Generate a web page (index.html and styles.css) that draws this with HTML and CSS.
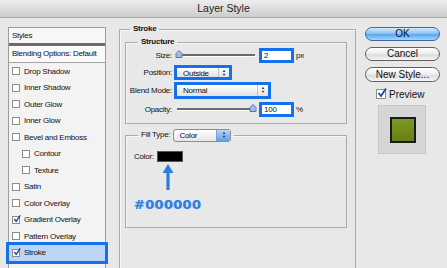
FILE: index.html
```html
<!DOCTYPE html>
<html lang="en">
<head>
    <meta charset="UTF-8">
    <meta name="viewport" content="width=device-width, initial-scale=1.0">
    <title>Layer Style</title>
    <link rel="stylesheet" href="styles.css">
</head>
<body>

<!-- Заголовок окна -->
<div class="titlebar">Layer Style</div>

<div class="dialog">

    <!-- Список стилей -->
    <div class="styles-panel">
        <div class="panel-head">Styles</div>
        <div class="panel-blend">Blending Options: Default</div>
        <ul class="style-list">
            <li><span class="box"></span>Drop Shadow</li>
            <li><span class="box"></span>Inner Shadow</li>
            <li><span class="box"></span>Outer Glow</li>
            <li><span class="box"></span>Inner Glow</li>
            <li><span class="box"></span>Bevel and Emboss</li>
            <li class="sub"><span class="box"></span>Contour</li>
            <li class="sub"><span class="box"></span>Texture</li>
            <li><span class="box"></span>Satin</li>
            <li><span class="box"></span>Color Overlay</li>
            <li><span class="box"><svg class="tick" viewBox="0 0 10 10"><path d="M1.5 5 L4 8 L9 0.5"/></svg></span>Gradient Overlay</li>
            <li><span class="box"></span>Pattern Overlay</li>
            <li class="current"><span class="box"><svg class="tick" viewBox="0 0 10 10"><path d="M1.5 5 L4 8 L9 0.5"/></svg></span>Stroke</li>
        </ul>
    </div>

    <!-- Настройки обводки -->
    <div class="main">
        <fieldset class="group stroke">
            <legend>Stroke</legend>

            <fieldset class="group structure">
                <legend>Structure</legend>
                <div class="form">
                    <label>Size:</label>
                    <div class="ctl">
                        <div class="slider">
                            <svg class="thumb thumb-left" viewBox="0 0 8 8"><path d="M1 3.5 L4 0.5 L7 3.5 V7.5 H1 Z"/></svg>
                        </div>
                        <span class="mark field">2</span>
                        <span class="unit">px</span>
                    </div>

                    <label>Position:</label>
                    <div class="ctl">
                        <span class="mark popup-wrap pos">
                            <span class="popup"><span class="val">Outside</span><span class="steps">&#9650;<br>&#9660;</span></span>
                        </span>
                    </div>

                    <label>Blend Mode:</label>
                    <div class="ctl">
                        <span class="mark popup-wrap blend">
                            <span class="popup"><span class="val">Normal</span><span class="steps">&#9650;<br>&#9660;</span></span>
                        </span>
                    </div>

                    <label>Opacity:</label>
                    <div class="ctl">
                        <div class="slider">
                            <svg class="thumb thumb-right" viewBox="0 0 8 8"><path d="M1 3.5 L4 0.5 L7 3.5 V7.5 H1 Z"/></svg>
                        </div>
                        <span class="mark field">100</span>
                        <span class="unit">%</span>
                    </div>
                </div>
            </fieldset>

            <fieldset class="group fill">
                <legend>
                    <span>Fill Type:</span>
                    <span class="select"><span class="val">Color</span><span class="steps">&#9650;<br>&#9660;</span></span>
                </legend>
                <div class="color-row">
                    <span>Color:</span>
                    <span class="swatch"></span>
                </div>
                <svg class="arrow" viewBox="0 0 12 26"><path d="M6 0 L11.5 9 H7.6 V26 H4.4 V9 H0.5 Z"/></svg>
                <div class="hex">#000000</div>
            </fieldset>
        </fieldset>
    </div>

    <!-- Кнопки -->
    <div class="side">
        <button class="btn btn-ok">OK</button>
        <button class="btn">Cancel</button>
        <button class="btn btn-new">New Style...</button>
        <div class="preview-check">
            <span class="box big"><svg class="tick" viewBox="0 0 10 10"><path d="M1.5 5 L4 8 L9 0.5"/></svg></span>
            Preview
        </div>
        <div class="preview">
            <div class="preview-swatch"></div>
        </div>
    </div>
</div>

</body>
</html>
```

FILE: styles.css
```css
html, body {
    height: 268px;
}
body {
    margin: 0;
    background-color: #e8e8e8;
    font-family: 'Liberation Sans', Arial, sans-serif;
    font-size: 8px;
    letter-spacing: -0.25px;
    color: #111;
    overflow: hidden;
}
.titlebar {
    height: 17px;
    line-height: 17px;
    text-align: center;
    font-size: 10.5px;
    letter-spacing: 0;
    color: #222;
    background: linear-gradient(#ededed, #cdcdcd);
    border-bottom: 1px solid #a9a9a9;
}
.dialog {
    display: flex;
    align-items: flex-start;
}

/* Левая панель */
.styles-panel {
    width: 98px;
    height: 241px;
    box-sizing: border-box;
    margin: 9px 0 0 8px;
    border: 1px solid #9c9c9c;
    border-bottom: none;
    background-color: #f3f3f3;
}
.panel-head {
    height: 15px;
    line-height: 15px;
    padding-left: 3px;
    background-color: #f7f7f7;
    border-bottom: 3px solid #6c6c6c;
}
.panel-blend {
    height: 16px;
    line-height: 16px;
    padding-left: 3px;
    background-color: #fafafa;
    border-bottom: 1px solid #a4a4a4;
}
.style-list {
    list-style: none;
    margin: 0;
    padding: 0;
}
.style-list li {
    display: flex;
    align-items: center;
    height: 16.5px;
    padding-left: 3px;
}
.style-list li.sub {
    padding-left: 13px;
}
.style-list li.current {
    background-color: #bcd5f6;
    outline: 3px solid #1570ec;
}
.box {
    position: relative;
    width: 6px;
    height: 6px;
    margin-right: 4px;
    border: 1px solid #8c8c8c;
    background-color: #fff;
    flex: none;
}
.box.big {
    width: 8px;
    height: 8px;
    margin-right: 3px;
}
.tick {
    position: absolute;
    left: 0;
    top: -2px;
    width: 8px;
    height: 8px;
    overflow: visible;
}
.tick path {
    fill: none;
    stroke: #1e4a9c;
    stroke-width: 1.8;
}
.box.big .tick {
    width: 10px;
    height: 10px;
}

/* Основная часть */
.main {
    margin: 6px 0 0 13px;
}
.group {
    margin: 0;
    border: 1px solid #ababab;
    box-shadow: inset 1px 1px 0 #f8f8f8;
    min-width: 0;
}
.group legend {
    font-weight: bold;
    line-height: 10px;
    padding: 0 3px;
}
.stroke {
    width: 237px;
    height: 250px;
    box-sizing: border-box;
    padding: 3px 0 0 5px;
}
.stroke > legend {
    margin-left: 5px;
}
.structure {
    width: 222px;
    box-sizing: border-box;
    padding: 0 0 4px 0;
}
.structure > legend {
    margin-left: 12px;
}
.form {
    display: grid;
    grid-template-columns: 46px auto;
    grid-template-rows: 16px 18px 19px 19px;
    column-gap: 2px;
    align-items: center;
}
.form label {
    text-align: right;
}
.ctl {
    display: flex;
    align-items: center;
}
.slider {
    position: relative;
    width: 78px;
    height: 2px;
    margin: 0 4px 0 3px;
    background-color: #6b6b6b;
    border-bottom: 1px solid #fff;
}
.thumb {
    position: absolute;
    top: -4px;
    width: 8px;
    height: 8px;
}
.thumb path {
    fill: #9bbde6;
    stroke: #5a7aa8;
    stroke-width: 1;
}
.thumb-left {
    left: -2px;
}
.thumb-right {
    right: -2px;
}
.mark {
    border: 3px solid #1570ec;
    box-sizing: border-box;
}
.field {
    width: 35px;
    height: 15px;
    line-height: 9px;
    padding-left: 2px;
    background-color: #fff;
}
.unit {
    margin-left: 2px;
}
.popup-wrap {
    display: block;
}
.pos {
    width: 58px;
    height: 15px;
}
.blend {
    width: 97px;
    height: 17px;
}
.popup {
    display: flex;
    height: 100%;
    background: linear-gradient(#ffffff, #e2e2e2);
}
.popup .val,
.select .val {
    flex: 1;
    padding-left: 6px;
    line-height: 11px;
}
.steps {
    width: 10px;
    font-size: 4px;
    line-height: 4px;
    letter-spacing: 0;
    text-align: center;
    padding-top: 1px;
    color: #222;
    border-left: 1px solid #c2c2c2;
}
.structure + .fill {
    margin-top: 4px;
}
.fill {
    width: 222px;
    height: 100px;
    box-sizing: border-box;
    padding: 9px 0 0 8px;
}
.fill > legend {
    margin-left: 4px;
    font-weight: normal;
    display: flex;
    align-items: center;
    line-height: 14px;
}
.select {
    display: flex;
    width: 58px;
    height: 13px;
    margin-left: 3px;
    box-sizing: border-box;
    border: 1px solid #8d8d8d;
    border-radius: 3px;
    background: linear-gradient(#ffffff, #e6e6e6);
    overflow: hidden;
}
.select .val {
    padding-left: 5px;
}
.select .steps {
    width: 13px;
    padding-top: 1px;
    background: linear-gradient(#b8d6f6, #5d9ee6);
    border-left: 1px solid #7a9cc8;
    color: #1b2f52;
}
.color-row {
    display: flex;
    align-items: center;
}
.swatch {
    width: 26px;
    height: 11px;
    margin-left: 3px;
    box-sizing: border-box;
    background-color: #000;
    border: 1px solid #555;
}
.arrow {
    display: block;
    width: 12px;
    height: 26px;
    margin: 2px 0 0 28px;
}
.arrow path {
    fill: #2b7de3;
}
.hex {
    margin-top: 8px;
    font-family: 'DejaVu Sans', sans-serif;
    font-weight: bold;
    font-size: 13px;
    line-height: 14px;
    letter-spacing: 0.3px;
    color: #2f7fe0;
    text-shadow: 0 0 1px #75abee;
}

/* Кнопки справа */
.side {
    display: flex;
    flex-direction: column;
    width: 75px;
    margin: 9px 0 0 9px;
}
.btn {
    width: 75px;
    height: 14px;
    margin-bottom: 6px;
    padding: 0;
    font-family: 'Liberation Sans', Arial, sans-serif;
    font-size: 10px;
    line-height: 12px;
    color: #111;
    border: 1px solid #5f5f5f;
    border-radius: 8px;
    background: linear-gradient(#ffffff, #ececec 50%, #dcdcdc 55%, #f6f6f6);
}
.btn-ok {
    border-color: #3d6aa6;
    background: linear-gradient(#d3e8fb, #86bff2 50%, #5aa5ec 55%, #a8d7fb);
}
.btn-new {
    height: 15px;
}
.preview-check {
    display: flex;
    align-items: center;
    margin: 1px 0 0 11px;
    height: 10px;
    font-size: 10px;
    letter-spacing: 0;
}
.preview {
    width: 48px;
    height: 49px;
    margin: 6px 0 0 13px;
    box-sizing: border-box;
    padding: 11px 0 0 11px;
    background-color: #d6d6d6;
    border: 1px solid #c6c6c6;
}
.preview-swatch {
    width: 26px;
    height: 26px;
    box-sizing: border-box;
    border: 2px solid #1a1a1a;
    background: linear-gradient(#7c9a22, #677f16);
}
```
